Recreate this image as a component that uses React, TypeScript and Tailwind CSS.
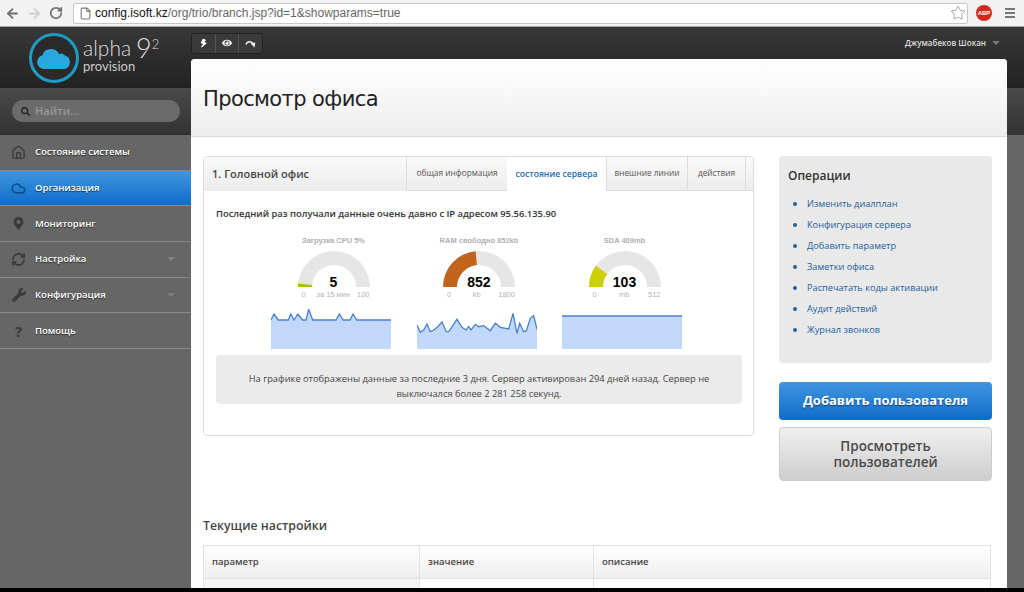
import React from "react";
import { ArrowLeft, ArrowRight, RotateCw, File, Star, Home, Cloud, RefreshCw } from "lucide-react";
import { FaBolt, FaEye, FaMapMarkerAlt, FaWrench, FaSearch } from "react-icons/fa";

const navItems = [
	{ label: "Состояние системы", icon: <Home size={15} strokeWidth={2} /> },
	{ label: "Организация", icon: <Cloud size={15} strokeWidth={2.5} />, active: true },
	{ label: "Мониторинг", icon: <FaMapMarkerAlt size={13} /> },
	{ label: "Настройка", icon: <RefreshCw size={15} strokeWidth={2.5} />, caret: true },
	{ label: "Конфигурация", icon: <FaWrench size={14} />, caret: true },
	{ label: "Помощь", icon: <span className="text-[15px] font-bold">?</span> }
];

const tabs = [
	{ label: "общая информация", w: "w-[101px]" },
	{ label: "состояние сервера", w: "w-[99px]", active: true },
	{ label: "внешние линии", w: "w-[81px]" },
	{ label: "действия", w: "w-[58px]" }
];

const operations = [
	"Изменить диалплан",
	"Конфигурация сервера",
	"Добавить параметр",
	"Заметки офиса",
	"Распечатать коды активации",
	"Аудит действий",
	"Журнал звонков"
];

const cpuLine: [number, number][] = [[213,510],[222,492],[235,510],[265,510],[272,492],[282,510],[293,492],[308,510],[318,510],[326,478],[338,510],[408,510],[418,492],[430,510],[450,510],[459,492],[470,510],[573,510]];
const ramLine: [number, number][] = [[650,525],[660,547],[670,540],[680,522],[690,545],[700,540],[712,530],[725,516],[738,545],[745,545],[770,508],[785,532],[797,540],[805,530],[812,540],[825,523],[835,530],[850,527],[870,542],[885,520],[900,532],[925,537],[938,490],[950,550],[958,520],[970,545],[978,543],[990,505],[1000,497],[1010,538]];

const Spark = ({ pts, ox }: { pts: [number, number][]; ox: number }) => {
	const line = pts.map(([x, y]) => `${((x - ox) / 3).toFixed(1)},${((y - 477) / 3).toFixed(1)}`).join(" ");
	return (
		<svg width="120" height="40" viewBox="0 0 120 40" className="block">
			<polygon points={`0,40 ${line} 120,40`} fill="#c2d8fa" />
			<polyline points={line} fill="none" stroke="#4a80cf" strokeWidth="1.3" />
		</svg>
	);
};

const arcPath = (from: number, to: number) => {
	const R = 36;
	const r = 22;
	const pt = (rad: number, f: number) => {
		const a = Math.PI * (1 - f);
		return `${(36 + rad * Math.cos(a)).toFixed(2)} ${(36 - rad * Math.sin(a)).toFixed(2)}`;
	};
	return `M${pt(R, from)} A${R} ${R} 0 0 1 ${pt(R, to)} L${pt(r, to)} A${r} ${r} 0 0 0 ${pt(r, from)} Z`;
};

const Gauge = ({ title, value, frac, color, min, max, unit, spark }: { title: string; value: string; frac: number; color: string; min: string; max: string; unit: string; spark: React.ReactNode }) => (
	<div className="flex w-[120px] flex-col items-center">
		<div className="flex flex-col items-center pl-[5px]">
			<div className="h-[11px] font-['Liberation_Sans',sans-serif] text-[7.5px] font-bold leading-[11px] text-[#b0b0b0]">{title}</div>
			<div className="relative mt-[5px] h-[36px] w-[72px]">
				<svg width="72" height="36" viewBox="0 0 72 36" className="block">
					<path d={arcPath(0, 1)} fill="#e6e6e6" />
					<path d={arcPath(0, frac)} fill={color} />
				</svg>
				<div className="absolute inset-x-0 bottom-[-3px] text-center font-['Liberation_Sans',sans-serif] text-[14px] font-bold leading-[16px] text-black">{value}</div>
			</div>
			<div className="mt-[2px] flex h-[12px] w-[72px] items-center justify-between font-['Liberation_Sans',sans-serif] text-[7.5px] text-[#b4b4b4]">
				<span className="w-[12px] text-center">{min}</span>
				<span>{unit}</span>
				<span>{max}</span>
			</div>
		</div>
		<div className="mt-[8px]">{spark}</div>
	</div>
);

export default function App() {
	return (
		<div className="flex h-[592px] w-[1024px] flex-col overflow-hidden bg-black font-['Open_Sans',sans-serif]">
			{/* browser chrome */}
			<div className="flex h-[27px] shrink-0 items-center border-b border-[#a8a8a8] bg-[#f2f2f2]">
				<div className="flex w-[73px] items-center pl-[5px] text-[#6f6f6f]">
					<ArrowLeft size={15} strokeWidth={3} />
					<ArrowRight size={15} strokeWidth={3} className="ml-[7px] text-[#cfcfcf]" />
					<RotateCw size={14} strokeWidth={3} className="ml-[7px]" />
				</div>
				<div className="flex h-[21px] w-[895px] items-center rounded-[2px] border border-[#c6c6c6] bg-white pl-[5px] font-['Liberation_Sans',sans-serif] text-[12px]">
					<File size={13} className="mr-[3px] text-[#777]" />
					<span className="text-[#111]">config.isoft.kz</span>
					<span className="text-[#666]">/org/trio/branch.jsp?id=1&amp;showparams=true</span>
					<Star size={16} strokeWidth={1} className="ml-auto mr-[1px] text-[#777]" />
				</div>
				<div className="ml-[8px] flex h-[16px] w-[16px] items-center justify-center rounded-full bg-[#d8261c] font-['Liberation_Sans',sans-serif] text-[6px] font-bold text-white">ABP</div>
				<div className="ml-[13px] flex w-[10px] flex-col gap-[2px]">
					<span className="h-[2px] bg-[#777]" />
					<span className="h-[2px] bg-[#777]" />
					<span className="h-[2px] bg-[#777]" />
				</div>
			</div>

			<div className="flex min-h-0 flex-1 pb-[4px]">
				{/* sidebar */}
				<aside className="flex w-[191px] shrink-0 flex-col bg-[#666]">
					<div className="flex h-[61px] shrink-0 items-center bg-gradient-to-b from-[#383838] to-[#222] pl-[29px] pt-[1px]">
						<div className="flex h-[50px] w-[50px] shrink-0 items-center justify-center rounded-full border-[3px] border-[#1f9cc4] bg-[#2a2a2a]">
							<svg width="36" height="22" viewBox="0 0 36 22">
								<path d="M8 22a7 7 0 0 1-1.500-13.800A8.500 8.500 0 0 1 15 2a9 9 0 0 1 8 5 6 6 0 0 1 2.500-.5A6.500 6.500 0 0 1 29 8.500 7 7 0 0 1 28.500 22Z" fill="#29a8df" />
							</svg>
						</div>
						<div className="mb-[7px] ml-[4px] flex flex-col text-[#ddd]">
							<div className="flex h-[22px] items-start font-['Lato',sans-serif] font-light">
								<span className="text-[21px] leading-[22px]">alpha</span>
								<span className="ml-[5px] text-[27px] leading-[22px]">9</span>
								<span className="text-[13px] leading-[14px]">2</span>
							</div>
							<span className="font-['Lato',sans-serif] text-[13px] leading-[14px] text-[#ccc]">provision</span>
						</div>
					</div>
					<div className="flex h-[47px] shrink-0 items-center border-b border-[#2c2c2c] bg-gradient-to-b from-[#4a4a4a] to-[#333] pl-[12px]">
						<div className="flex h-[22px] w-[168px] items-center gap-[5px] rounded-full bg-[#6b6b6b] pl-[9px] text-[11px] font-semibold text-[#999]">
							<FaSearch size={9} className="text-[#222]" />
							<span>Найти...</span>
						</div>
					</div>
					<nav className="flex flex-col">
						{navItems.map((item) => (
							<div
								key={item.label}
								className={
									item.active
										? "flex h-[35.7px] items-center border-b border-[#8a8a8a] bg-gradient-to-b from-[#3f95e0] to-[#0a6cc9] text-white"
										: "flex h-[35.7px] items-center border-b border-[#8a8a8a] bg-[#666] text-white"
								}
							>
								<span className={item.active ? "flex w-[35px] justify-center pl-[2px] text-[#0c4f95]" : "flex w-[35px] justify-center pl-[2px] text-[#3a3a3a]"}>{item.icon}</span>
								<span className="text-[9.500px] font-semibold [text-shadow:0_1px_1px_rgba(0,0,0,0.6)]">{item.label}</span>
								{item.caret && <span className="ml-auto mr-[16px] h-0 w-0 border-x-[4px] border-t-[4px] border-x-transparent border-t-[#808080]" />}
							</div>
						))}
					</nav>
				</aside>

				{/* right part */}
				<div className="flex min-w-0 flex-1 flex-col bg-[linear-gradient(#383838,#222_61px,#4a4a4a_61px,#333_108px,#666_108px)]">
					<div className="flex h-[32px] shrink-0 items-center justify-between pr-[24px]">
						<div className="flex h-[21px] w-[72px] items-center rounded-[3px] border border-[#222] bg-[#3a3a3a] text-white">
							<span className="flex h-full flex-1 items-center justify-center border-r border-[#555]"><FaBolt size={9} className="rotate-[20deg]" /></span>
							<span className="flex h-full flex-1 items-center justify-center border-r border-[#555]"><FaEye size={10} /></span>
							<span className="flex h-full flex-1 items-center justify-center">
								<svg width="11" height="9" viewBox="0 0 11 9">
									<path d="M1 5.500C2 2.500 5.500 1.500 8 4.500" fill="none" stroke="#eee" strokeWidth="1.600" />
									<path d="M5.600 4.600 10.400 3.600 9.500 8.500Z" fill="#eee" />
								</svg>
							</span>
						</div>
						<div className="flex items-center text-[8px] font-semibold text-[#ddd]">
							<span>Джумабеков Шокан</span>
							<span className="ml-[6px] h-0 w-0 border-x-[4px] border-t-[4px] border-x-transparent border-t-[#777]" />
						</div>
					</div>

					<main className="mr-[17px] flex min-h-0 flex-1 flex-col overflow-hidden rounded-t-[4px] bg-white">
						<header className="flex h-[78px] shrink-0 items-center border-b border-[#d9d9d9] bg-gradient-to-b from-white to-[#eee] pl-[12px] pt-[3px]">
							<h1 className="font-['DejaVu_Sans',sans-serif] text-[21px] leading-none tracking-[-0.6px] text-[#222]">Просмотр офиса</h1>
						</header>

						<div className="flex gap-[25px] pl-[12px] pt-[19px]">
							{/* office card */}
							<section className="flex h-[280px] w-[551px] shrink-0 flex-col rounded-[4px] border border-[#dcdcdc]">
								<div className="flex h-[34px] shrink-0 items-stretch rounded-t-[4px] bg-gradient-to-b from-[#fafafa] to-[#ececec]">
									<div className="flex w-[202px] items-center pl-[8px] text-[11px] font-semibold text-[#444]">1. Головной офис</div>
									{tabs.map((t) => (
										<div
											key={t.label}
											className={
												t.active
													? `flex ${t.w} items-center justify-center bg-white text-[8.600px] font-semibold text-[#1f6cb0]`
													: `flex ${t.w} items-center justify-center border-b border-l border-[#dcdcdc] text-[8.300px] text-[#555]`
											}
										>
											{t.label}
										</div>
									))}
									<div className="flex-1 border-b border-l border-[#dcdcdc]" />
								</div>
								<div className="flex flex-1 flex-col pl-[12px] pr-[11px]">
									<p className="mt-[17px] text-[9.400px] font-semibold leading-[12px] text-[#333]">Последний раз получали данные очень давно с IP адресом 95.56.135.90</p>
									<div className="mt-[15px] flex gap-[25.500px] pl-[55px]">
										<Gauge title="Загрузка CPU 5%" value="5" frac={0.03} color="#a5c400" min="0" max="100" unit="за 15 мин" spark={<Spark pts={cpuLine} ox={213} />} />
										<Gauge title="RAM свободно 852kb" value="852" frac={0.47} color="#c1651d" min="0" max="1800" unit="kb" spark={<Spark pts={ramLine} ox={650} />} />
										<Gauge title="SDA 409mb" value="103" frac={0.2} color="#cdd100" min="0" max="512" unit="mb" spark={<Spark pts={[[0, 498], [360, 498]]} ox={0} />} />
									</div>
									<div className="mt-[6px] flex h-[49px] items-center justify-center rounded-[4px] bg-[#ebebeb] px-[30px] pt-[12px] text-center text-[9.300px] leading-[15px] text-[#444]">
										На графике отображены данные за последние 3 дня. Сервер активирован 294 дней назад. Сервер не выключался более 2 281 258 секунд.
									</div>
								</div>
							</section>

							{/* operations */}
							<div className="flex w-[213px] shrink-0 flex-col">
								<div className="h-[207px] rounded-[4px] bg-[#e9e9e9] pl-[9px] pt-[12px]">
									<h3 className="text-[12px] font-semibold leading-[16px] text-[#333]">Операции</h3>
									<ul className="mt-[9px] flex flex-col">
										{operations.map((op) => (
											<li key={op} className="flex h-[21px] items-center text-[9.200px] text-[#22609f]">
												<span className="ml-[5px] mr-[10px] h-[4px] w-[4px] rounded-full bg-[#22609f]" />
												{op}
											</li>
										))}
									</ul>
								</div>
								<button className="mt-[19px] h-[38px] rounded-[4px] bg-gradient-to-b from-[#3f95e0] to-[#0a6cc9] text-[13px] font-bold text-white [text-shadow:0_1px_1px_rgba(0,0,0,0.5)]">Добавить пользователя</button>
								<button className="mt-[7px] h-[54px] rounded-[4px] border border-[#ccc] bg-gradient-to-b from-[#f0f0f0] to-[#cdcdcd] px-[20px] text-[13.500px] font-semibold leading-[16px] text-[#4a4a4a]">Просмотреть пользователей</button>
							</div>
						</div>

						<h2 className="ml-[12px] mt-[37px] text-[12.300px] font-semibold leading-[16px] text-[#444]">Текущие настройки</h2>
						<div className="ml-[12px] mt-[11px] grid w-[788px] grid-cols-[216px_174px_1fr] border-l border-r border-t border-[#e2e2e2] text-[9.500px] font-semibold text-[#444]">
							<div className="flex h-[33px] items-center border-b border-r border-[#e2e2e2] bg-gradient-to-b from-white to-[#efefef] pl-[8px]">параметр</div>
							<div className="flex h-[33px] items-center border-b border-r border-[#e2e2e2] bg-gradient-to-b from-white to-[#efefef] pl-[8px]">значение</div>
							<div className="flex h-[33px] items-center border-b border-[#e2e2e2] bg-gradient-to-b from-white to-[#efefef] pl-[8px]">описание</div>
							<div className="h-[12px] border-r border-[#e2e2e2] bg-[#f5f5f5]" />
							<div className="h-[12px] border-r border-[#e2e2e2]" />
							<div className="h-[12px]" />
						</div>
					</main>
				</div>
			</div>
		</div>
	);
}
